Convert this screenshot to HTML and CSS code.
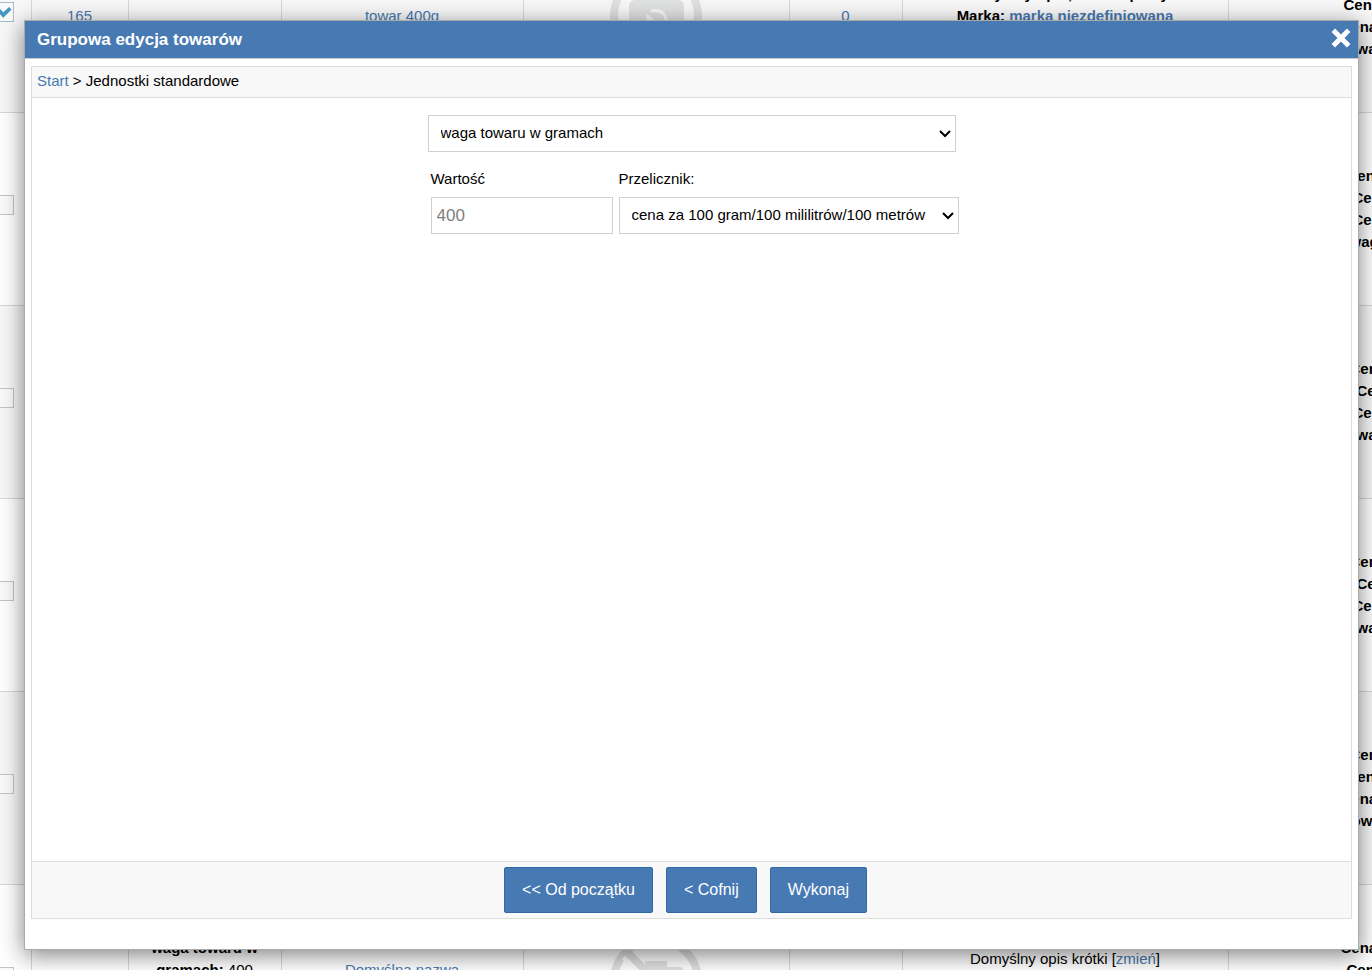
FILE: index.html
```html
<!DOCTYPE html>
<html lang="pl">
<head>
<meta charset="utf-8">
<title>Grupowa edycja towarów</title>
<link rel="stylesheet" href="styles.css">
</head>
<body>
<main class="listing">
  <table class="goods">
    <colgroup>
      <col class="col-check"><col class="col-id"><col class="col-unit"><col class="col-name">
      <col class="col-photo"><col class="col-stock"><col class="col-desc"><col class="col-price">
    </colgroup>
    <tbody>
      <tr>
        <td class="check"><input type="checkbox" aria-label="Zaznacz towar 165" checked></td>
        <td><a href="#">165</a></td>
        <td></td>
        <td><a href="#">towar 400g</a></td>
        <td>
          <svg class="photo" viewBox="0 0 92 92" aria-hidden="true">
            <circle cx="46" cy="46" r="42" fill="none" stroke="#dfe0e0" stroke-width="8"/>
            <rect x="19" y="30" width="55" height="40" rx="6" fill="#e0e2e1"/>
            <path d="M41 41q14-3 16 12" fill="none" stroke="#f8f8f8" stroke-width="3"/>
            <path d="M36 44q8 3 11 12h-10z" fill="#f8f8f8"/>
          </svg>
        </td>
        <td><a href="#">0</a></td>
        <td><strong>Domyślny opis, krótki i pełny</strong><br><strong>Marka: <a href="#">marka niezdefiniowana</a></strong><br>&nbsp;</td>
        <td class="price"><p class="in-b">Cena</p><p class="in-b">Cena</p><p class="in-a">Cena</p><p class="in-f">waga</p></td>
      </tr>
      <tr>
        <td class="check"><input type="checkbox" aria-label="Zaznacz towar"></td>
        <td></td><td></td><td></td><td></td><td></td><td></td>
        <td class="price"><p class="in-c">Cena</p><p class="in-e">Cena</p><p class="in-e">Cena</p><p class="in-d">waga</p></td>
      </tr>
      <tr>
        <td class="check"><input type="checkbox" aria-label="Zaznacz towar"></td>
        <td></td><td></td><td></td><td></td><td></td><td></td>
        <td class="price"><p class="in-d">Cena</p><p class="in-f">Cena</p><p class="in-e">Cena</p><p class="in-f">waga</p></td>
      </tr>
      <tr>
        <td class="check"><input type="checkbox" aria-label="Zaznacz towar"></td>
        <td></td><td></td><td></td><td></td><td></td><td></td>
        <td class="price"><p class="in-d">Cena</p><p class="in-f">Cena</p><p class="in-e">Cena</p><p class="in-f">waga</p></td>
      </tr>
      <tr>
        <td class="check"><input type="checkbox" aria-label="Zaznacz towar"></td>
        <td></td><td></td><td></td><td></td><td></td><td></td>
        <td class="price"><p class="in-d">Cena</p><p class="in-c">Cena</p><p class="in-a">Cena</p><p class="in-b">Towar</p></td>
      </tr>
      <tr>
        <td class="check"><input type="checkbox" aria-label="Zaznacz towar"></td>
        <td></td>
        <td><strong>waga towaru w<br>gramach:</strong> 400<br>&nbsp;<br>&nbsp;</td>
        <td><a href="#">Domyślna nazwa</a><br>&nbsp;</td>
        <td>
          <svg class="photo" viewBox="0 0 92 92" aria-hidden="true">
            <circle cx="46" cy="46" r="42" fill="none" stroke="#dfe0e0" stroke-width="8"/>
            <path d="M35 26h22v6h12q5 0 5 5v30H27V32h8z" fill="#e0e2e1"/>
            <path d="M14 22l56 56" stroke="#fff" stroke-width="6"/>
            <path d="M17 17l58 58" stroke="#dfe0e0" stroke-width="8"/>
          </svg>
        </td>
        <td></td>
        <td>Domyślny opis krótki [<a href="#">zmień</a>]<br>&nbsp;<br>&nbsp;</td>
        <td class="price"><p class="in-a">Cena</p><p class="in-c">Cena</p><p>&nbsp;</p><p>&nbsp;</p></td>
      </tr>
    </tbody>
  </table>
</main>

<section class="dialog" role="dialog" aria-labelledby="dialog-title">
  <header class="dialog-header">
    <h1 id="dialog-title">Grupowa edycja towarów</h1>
    <button class="close" type="button" aria-label="Zamknij">
      <svg viewBox="0 0 20 20" aria-hidden="true"><path d="M3 3l14 14M17 3L3 17" stroke="#fff" stroke-width="4.5"/></svg>
    </button>
  </header>
  <form class="panel">
    <nav class="crumbs"><a href="#">Start</a> &gt; Jednostki standardowe</nav>
    <div class="panel-body">
      <div class="fields">
        <div class="select">
          <select aria-label="Jednostka"><option>waga towaru w gramach</option></select>
          <svg class="arrow" viewBox="0 0 12 8" aria-hidden="true"><path d="M1 1l5 5 5-5"/></svg>
        </div>
        <div class="pair">
          <label for="value">Wartość</label>
          <label for="factor">Przelicznik:</label>
          <input id="value" type="text" placeholder="400">
          <div class="select">
            <select id="factor"><option>cena za 100 gram/100 mililitrów/100 metrów</option></select>
            <svg class="arrow" viewBox="0 0 12 8" aria-hidden="true"><path d="M1 1l5 5 5-5"/></svg>
          </div>
        </div>
      </div>
    </div>
    <footer class="actions">
      <button type="button">&lt;&lt; Od początku</button>
      <button type="button">&lt; Cofnij</button>
      <button type="submit">Wykonaj</button>
    </footer>
  </form>
</section>
</body>
</html>
```
FILE: styles.css
```css
* { box-sizing: border-box; }

body {
  margin: 0;
  height: 100vh;
  overflow: hidden;
  background: #fff;
  color: #000;
  font: 15px/22px "Liberation Sans", Arial, Helvetica, sans-serif;
}

a { color: #4779b2; text-decoration: none; }
input, select, button { font: inherit; color: inherit; margin: 0; }

/* Goods list, scrolled part of the way through its first row */
.listing { height: 100vh; overflow: hidden; }
.goods {
  width: 1600px;
  margin-top: -81px;
  border-collapse: collapse;
  table-layout: fixed;
}
.goods tr { height: 193px; background: #fff; }
.goods tr:nth-child(odd) { background: #f8f8f8; }
.goods td {
  padding: 0 0 1px;
  border: 1px solid #d8d8d8;
  text-align: center;
  vertical-align: middle;
}
.col-check { width: 31px; }
.col-id { width: 97px; }
.col-unit { width: 153px; }
.col-name { width: 242px; }
.col-photo { width: 266px; }
.col-stock { width: 113px; }
.col-desc { width: 326px; }
.goods .check { padding-bottom: 8px; text-align: left; border-left: 0; }
.check input {
  appearance: none;
  display: block;
  width: 20px;
  height: 20px;
  margin-left: -6px;
  border: 1px solid #c4c4c4;
  background: #fafafa;
}
.check input:checked { border-color: #a9bccb; }
.check input:checked::before {
  content: "";
  display: block;
  height: 18px;
  background: #4796c4;
  clip-path: polygon(14% 48%, 28% 34%, 46% 52%, 78% 22%, 92% 36%, 46% 82%);
}
.photo { display: block; width: 92px; height: 92px; margin: 0 auto; }
.goods .price { text-align: left; font-weight: bold; }
.price p { margin: 0; white-space: nowrap; }
.in-a { padding-left: 112px; }
.in-b { padding-left: 115px; }
.in-c { padding-left: 118px; }
.in-d { padding-left: 121px; }
.in-e { padding-left: 124px; }
.in-f { padding-left: 128px; }

/* Dialog window over the list */
.dialog {
  position: absolute;
  inset: 20px 13px 20px 24px;
  display: flex;
  flex-direction: column;
  border: 1px solid #aaa;
  background: #fff;
  box-shadow: 0 5px 22px rgba(0, 0, 0, .5);
}
.dialog-header {
  display: flex;
  align-items: center;
  justify-content: space-between;
  height: 38px;
  padding: 0 6px 0 12px;
  border-bottom: 1px solid #c5cbd2;
  background: #4779b2;
  color: #fff;
}
.dialog-header h1 { margin: 0; font-size: 17px; line-height: 22px; }
.close { padding: 0 0 4px; border: 0; background: none; }
.close svg { display: block; width: 22px; height: 22px; }
.panel {
  flex: 1;
  display: flex;
  flex-direction: column;
  margin: 7px 6px 30px;
  border: 1px solid #ddd;
}
.crumbs {
  padding: 3px 5px 5px;
  border-bottom: 1px solid #ddd;
  background: #f8f8f8;
}
.panel-body { flex: 1; padding: 17px; }
.fields { max-width: 528px; margin: 0 auto; }
.select { position: relative; }
.select select {
  appearance: none;
  display: block;
  width: 100%;
  height: 37px;
  padding: 0 28px 2px 12px;
  border: 1px solid #d0d0d0;
  border-radius: 0;
  background: #fff;
}
.arrow {
  position: absolute;
  right: 5px;
  top: 15px;
  width: 12px;
  height: 8px;
  fill: none;
  stroke: #000;
  stroke-width: 2;
  pointer-events: none;
}
.pair {
  display: grid;
  grid-template-columns: 182px 1fr;
  column-gap: 6px;
  row-gap: 7px;
  margin: 16px -3px 0 3px;
}
.pair input {
  width: 100%;
  height: 37px;
  padding: 0 5px;
  border: 1px solid #d0d0d0;
  font-size: 17px;
}
.pair input::placeholder { color: #808080; }
.actions {
  display: flex;
  justify-content: center;
  gap: 13px;
  padding: 5px 12px 5px 0;
  border-top: 1px solid #ddd;
  background: #f8f8f8;
}
.actions button {
  height: 46px;
  padding: 0 17px;
  border: 1px solid #2f69a8;
  border-radius: 2px;
  background: #4779b2;
  color: #fff;
  font-size: 16px;
}
```
